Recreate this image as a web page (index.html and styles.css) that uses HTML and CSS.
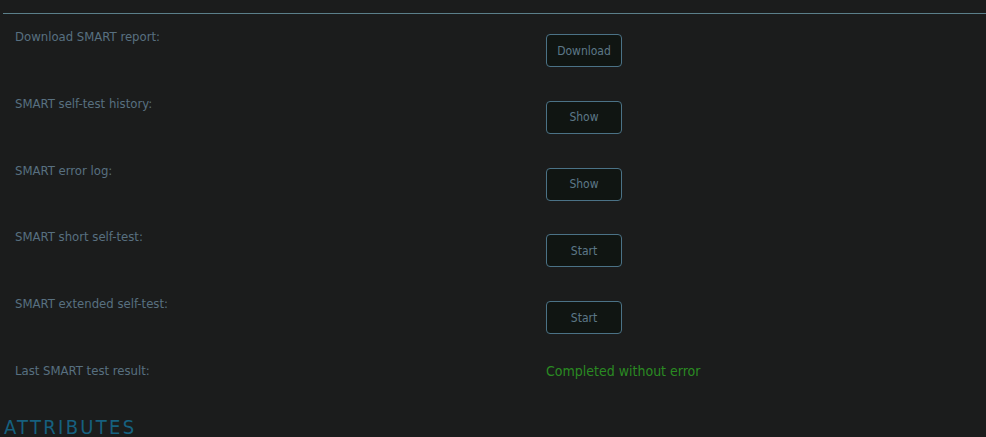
FILE: index.html
```html
<!DOCTYPE html>
<html lang="en">
<head>
    <meta charset="UTF-8">
    <meta name="viewport" content="width=device-width, initial-scale=1.0">
    <title>Disk SMART</title>
    <link rel="stylesheet" href="styles.css">
</head>
<body>
    <hr class="divider">
    <div class="smart-table">
        <div class="row">
            <div class="label">Download SMART report:</div>
            <div class="value"><button class="btn">Download</button></div>
        </div>
        <div class="row">
            <div class="label">SMART self-test history:</div>
            <div class="value"><button class="btn">Show</button></div>
        </div>
        <div class="row">
            <div class="label">SMART error log:</div>
            <div class="value"><button class="btn">Show</button></div>
        </div>
        <div class="row">
            <div class="label">SMART short self-test:</div>
            <div class="value"><button class="btn">Start</button></div>
        </div>
        <div class="row">
            <div class="label">SMART extended self-test:</div>
            <div class="value"><button class="btn">Start</button></div>
        </div>
        <div class="row last">
            <div class="label">Last SMART test result:</div>
            <div class="value result">Completed without error</div>
        </div>
    </div>
    <h2 class="section-title">ATTRIBUTES</h2>
</body>
</html>
```

FILE: styles.css
```css
body {
    background-color: #1b1c1c;
    color: #587080;
    margin: 0;
    padding: 0;
    font-family: 'DejaVu Sans Condensed', 'DejaVu Sans', sans-serif;
    font-size: 13px;
}
.divider {
    border: 0;
    border-top: 1px solid #5b7f8a;
    margin: 13px 0 0 3px;
}
.smart-table {
    padding: 15px 0 0 15px;
}
.row {
    display: grid;
    grid-template-columns: 531px 1fr;
    height: 66.75px;
}
.row.last {
    height: 52px;
}
.label {
    line-height: 16px;
}
.value {
    padding-top: 5px;
}
.btn {
    width: 76px;
    height: 33px;
    background-color: #101512;
    border: 1px solid #4b7286;
    border-radius: 4px;
    color: #5d7888;
    font-family: inherit;
    font-size: 12px;
    padding: 0;
}
.result {
    padding-top: 0;
    line-height: 16px;
    color: #2a8a22;
    font-size: 14px;
}
.section-title {
    margin: 0 0 0 4px;
    font-weight: normal;
    font-size: 20px;
    letter-spacing: 2.3px;
    color: #16607f;
}
```
